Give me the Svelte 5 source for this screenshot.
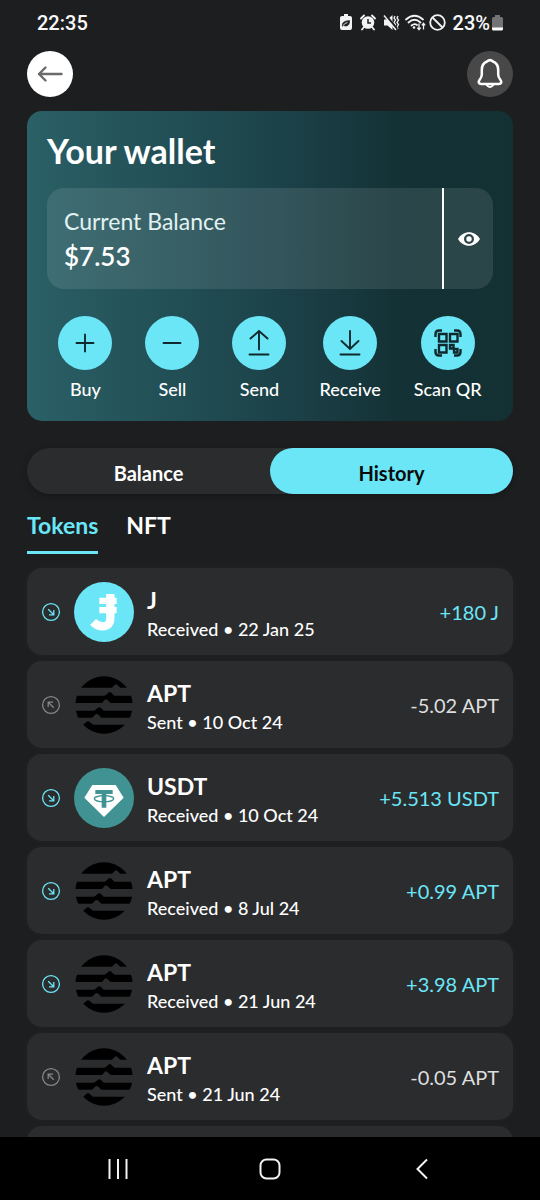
<script>
  let tab = $state('History');
  let kind = $state('Tokens');
  let visible = $state(true);

  const actions = ['Buy', 'Sell', 'Send', 'Receive', 'Scan QR'];
  const rows = [
    { coin: 'J', dir: 'Received', date: '22 Jan 25', amount: '+180 J' },
    { coin: 'APT', dir: 'Sent', date: '10 Oct 24', amount: '-5.02 APT' },
    { coin: 'USDT', dir: 'Received', date: '10 Oct 24', amount: '+5.513 USDT' },
    { coin: 'APT', dir: 'Received', date: '8 Jul 24', amount: '+0.99 APT' },
    { coin: 'APT', dir: 'Received', date: '21 Jun 24', amount: '+3.98 APT' },
    { coin: 'APT', dir: 'Sent', date: '21 Jun 24', amount: '-0.05 APT' }
  ];
</script>

<div class="screen">
  <div class="status">
    <span class="time">22:35</span>
    <div class="indicators">
      <svg width="12" height="17" viewBox="0 0 12 17"><path fill="#f2f2f2" d="M4 0h4v2h2q2 0 2 2v10q0 2-2 2H2q-2 0-2-2V4q0-2 2-2h2z"/><path d="M2.500 12.500C1.500 8 5 7 9.500 6.500C10 11 7 13 3.500 11.500M3 12q2-3 4-3.500" fill="#1d1e20" stroke="#1d1e20" stroke-width=".6"/><path d="M3 11.500q2-2.500 4.500-3" fill="none" stroke="#f2f2f2" stroke-width=".9"/></svg>
      <svg width="16" height="17" viewBox="0 0 16 17"><circle cx="8" cy="8.500" r="6.300" fill="#f2f2f2"/><path d="M1 4.500L4 1.500M15 4.500L12 1.500M4 13l-2 2.500M12 13l2 2.500" stroke="#f2f2f2" stroke-width="1.800" stroke-linecap="round"/><path d="M8 5v4h3" fill="none" stroke="#1d1e20" stroke-width="1.500"/></svg>
      <svg width="17" height="17" viewBox="0 0 17 17"><path d="M1 5.500h3.500L9.500 1v15l-5-4.500H1z" fill="#f2f2f2"/><path d="M12 2l-1 2 1.500 2L11 8.500l1.500 2L11 13l1 2M15 2l-1 2 1.500 2L14 8.500l1.500 2L14 13l1 2" fill="none" stroke="#f2f2f2" stroke-width="1.300"/><path d="M2.500 1L14 15" stroke="#1d1e20" stroke-width="2.400"/><path d="M1 1.500L13 16" stroke="#f2f2f2" stroke-width="1.400"/></svg>
      <svg class="wifi" width="21" height="17" viewBox="0 0 21 17"><path d="M1 5.500Q9.500-2 18 5.500M3.500 8.500Q9.500 3 15.500 8.500M6.500 11.500q3-2.500 5.500-.5" fill="none" stroke="#f2f2f2" stroke-width="1.800" stroke-linecap="round"/><circle cx="9" cy="13.500" r="1.300" fill="#f2f2f2"/><path d="M14 9.500v6M12.300 13.700l1.700 2 1.700-2M18.500 15.500v-6M16.800 11.300l1.700-2 1.700 2" fill="none" stroke="#f2f2f2" stroke-width="1.300"/></svg>
      <svg width="17" height="17" viewBox="0 0 17 17"><circle cx="8.500" cy="8.500" r="7.300" fill="none" stroke="#f2f2f2" stroke-width="1.800"/><path d="M3.500 3.500l10 10" stroke="#f2f2f2" stroke-width="1.800"/></svg>
      <span class="percent">23%</span>
      <svg width="11" height="16" viewBox="0 0 11 16"><path d="M3 0h5v2h1.500q1.500 0 1.500 1.500V13H0V3.500Q0 2 1.500 2H3z" fill="#747476"/><path d="M0 12.500h11V14q0 1.500-1.500 1.500h-8Q0 15.500 0 14z" fill="#fff"/></svg>
    </div>
  </div>

  <header>
    <button class="round back" aria-label="Back">
      <svg width="26" height="18" viewBox="0 0 26 18"><path d="M24.500 9H2M8.500 2.500L2 9l6.500 6.500" fill="none" stroke="#6a6a6a" stroke-width="2.400" stroke-linecap="round" stroke-linejoin="round"/></svg>
    </button>
    <button class="round bell" aria-label="Notifications">
      <svg width="26" height="32" viewBox="0 0 26 32"><path d="M10 3.500Q13 .8 16 3.500C20 5 21.200 8.500 21.200 12v4.500q0 2.500 2 5c2 2.600 1 4.500-1.500 4.500H4.300C1.800 26 .8 24.100 2.800 21.500q2-2.500 2-5V12C4.800 8.500 6 5 10 3.500z" fill="none" stroke="#fff" stroke-width="2.500" stroke-linejoin="round"/><path d="M8 26.500c1.500 1 2.500 3.500 5 3.500s3.500-2.500 5-3.500z" fill="#fff"/><path d="M11 27h4q-2 1.500-4 0" fill="#484849"/></svg>
    </button>
  </header>

  <main>
    <section class="wallet">
      <h1>Your wallet</h1>
      <div class="balance">
        <div class="figures">
          <span class="caption">Current Balance</span>
          <strong>{visible ? '$7.53' : '••••'}</strong>
        </div>
        <button class="eye" aria-label="Show or hide balance" onclick={() => (visible = !visible)}>
          <svg width="24" height="16" viewBox="0 0 24 16"><path fill-rule="evenodd" fill="#fff" d="M1 8C6-1 18-1 23 8C18 17 6 17 1 8zM12 3a5 5 0 1 0 0 10a5 5 0 1 0 0-10z"/><circle cx="12" cy="8" r="2.700" fill="#fff"/></svg>
        </button>
      </div>
      <div class="actions">
        {#each actions as name}
          <button class="action">
            <span class="disc">
              {#if name === 'Scan QR'}
                <svg width="28" height="28" viewBox="0 0 28 28" fill="none" stroke="#10292d" stroke-width="2.400"><path d="M1.500 8V5q0-3.500 3.500-3.500H8M20 1.500h3q3.500 0 3.500 3.500v3M26.500 20v3q0 3.500-3.500 3.500h-3M8 26.500H5Q1.500 26.500 1.500 23v-3"/><path d="M5 5h7.500v7.500H5zM16 5h7.500v7.500H16zM5 16h7.500v7.500H5zM16 16h3.500v3.500H16zM20 20h3.500v3.500H20z"/></svg>
              {:else}
                <svg width="28" height="28" viewBox="0 0 28 28" fill="none" stroke="#10292d" stroke-width="1.900" stroke-linecap="round">
                  {#if name === 'Buy'}<path d="M5.500 14h17M14 5.500v17"/>
                  {:else if name === 'Sell'}<path d="M5.500 14h17"/>
                  {:else if name === 'Send'}<path d="M14 20.500V2M5.500 9.500L14 2l8.500 7.500M4.500 25.500h19"/>
                  {:else}<path d="M14 2v18M5.500 12L14 20l8.500-8M4.500 25.500h19"/>{/if}
                </svg>
              {/if}
            </span>
            <span>{name}</span>
          </button>
        {/each}
      </div>
    </section>

    <div class="switch">
      {#each ['Balance', 'History'] as name}
        <button class:on={tab === name} onclick={() => (tab = name)}>{name}</button>
      {/each}
    </div>

    <nav class="tabs">
      {#each ['Tokens', 'NFT'] as name}
        <button class:on={kind === name} onclick={() => (kind = name)}>{name}</button>
      {/each}
    </nav>

    <ul>
      {#each rows as row}
        <li class:sent={row.dir === 'Sent'}>
          <svg class="dir" width="20" height="20" viewBox="0 0 20 20" fill="none" stroke="currentColor" stroke-width="1.300"><circle cx="10" cy="10" r="8.400"/>
            {#if row.dir === 'Sent'}<path d="M12.800 12.800L7.200 7.200M7.200 12V7.200H12"/>
            {:else}<path d="M7.200 7.200l5.600 5.600M12.800 8v4.800H8"/>{/if}
          </svg>
          {#if row.coin === 'J'}
            <svg class="coin" viewBox="0 0 180 180"><circle cx="90" cy="90" r="90" fill="#6ae6f7"/><path d="M109 36V108Q109 133 86 133Q70 133 57 120" fill="none" stroke="#fff" stroke-width="25"/><path d="M76 47h52v19H76zM76 75h52v19H76z" fill="#fff"/></svg>
          {:else if row.coin === 'USDT'}
            <svg class="coin" viewBox="0 0 180 180"><circle cx="90" cy="90" r="90" fill="#409293"/><path d="M55 51h70l24 38-59 58-59-58z" fill="#fff"/><path d="M64 66h52v12H97v41H83V78H64z" fill="#409293"/><ellipse cx="90" cy="92" rx="29" ry="9" fill="none" stroke="#409293" stroke-width="4"/></svg>
          {:else}
            <svg class="coin" viewBox="-4 -4 180 180"><circle cx="86" cy="86" r="86"/><path fill="#2b2c2e" d="M-2 34H110L118 26Q122 22 126 26L135 34H174V58H117L108 49Q104 45 99 49L91 57L86 58H-2zM-2 80H80L88 71Q92 67 96 71L106 80H174V103H85L77 95Q72 90 67 95L59 102L54 103H-2zM-2 124H50L59 115Q64 111 69 115L78 124H174V145H53L43 137Q38 132 33 137L24 145L18 151H-2z"/></svg>
          {/if}
          <div class="what">
            <b>{row.coin}</b>
            <span>{row.dir} • {row.date}</span>
          </div>
          <span class="amount">{row.amount}</span>
        </li>
      {/each}
      <li aria-hidden="true"></li>
    </ul>
  </main>

  <footer>
    <button aria-label="Recent apps"><svg width="22" height="22" viewBox="0 0 22 22"><path d="M2.500 1v20M11 1v20M19.500 1v20" stroke="#f2f2f2" stroke-width="2"/></svg></button>
    <button aria-label="Home"><svg width="22" height="22" viewBox="0 0 22 22"><rect x="1.500" y="1.500" width="19" height="19" rx="6" fill="none" stroke="#f2f2f2" stroke-width="2"/></svg></button>
    <button aria-label="Go back"><svg width="22" height="22" viewBox="0 0 22 22"><path d="M16 1.500L6.500 11l9.500 9.500" fill="none" stroke="#f2f2f2" stroke-width="2"/></svg></button>
  </footer>
</div>

<style>
  :global(body) { margin: 0; background: #1d1e20; }
  .screen {
    height: 100vh;
    display: flex;
    flex-direction: column;
    background: #1d1e20;
    color: #fff;
    font-family: "Century Gothic", Lato, sans-serif;
    overflow: hidden;
  }
  button {
    font: inherit;
    color: inherit;
    background: none;
    border: 0;
    padding: 0;
    cursor: pointer;
  }
  svg { display: block; flex: none; }

  .status {
    display: flex;
    justify-content: space-between;
    align-items: center;
    height: 45px;
    padding: 0 37px;
    font: 500 20px/24px Roboto, sans-serif;
    color: #f8f8f8;
    flex: none;
  }
  .indicators { display: flex; align-items: center; gap: 5px; }
  .indicators svg:first-child { margin-right: 3px; }
  .indicators svg:nth-child(2) { margin-right: 2px; }
  .indicators .wifi { margin-right: -2px; }
  .percent { padding-left: 2px; }
  .percent + svg { margin-left: -3px; }

  header {
    display: flex;
    justify-content: space-between;
    padding: 6px 27px 14px;
    flex: none;
  }
  .round {
    width: 46px;
    height: 46px;
    border-radius: 50%;
    display: grid;
    place-items: center;
  }
  .back { background: #fff; }
  .bell { background: #484849; }

  main {
    flex: 1;
    min-height: 0;
    overflow: hidden;
    padding: 0 27px;
  }
  .wallet {
    padding: 20px;
    border-radius: 15px;
    background: linear-gradient(90deg, #2a6066 0%, #1c4249 52%, #143236 76%, #133033 100%);
  }
  h1 { margin: 0; font-size: 34px; line-height: 40px; font-weight: 700; }
  .balance {
    display: flex;
    height: 101px;
    margin-top: 17px;
    border-radius: 17px;
    background: rgba(255, 255, 255, .1);
  }
  .figures {
    flex: 1;
    display: flex;
    flex-direction: column;
    justify-content: center;
    padding-left: 17px;
  }
  .caption { font-size: 23px; line-height: 34px; color: #e2f2f3; }
  .figures strong { font-size: 26px; line-height: 36px; font-weight: 600; }
  .eye { width: 51px; border-left: 2px solid #fff; display: grid; place-items: center; }
  .actions { display: flex; justify-content: center; gap: 33px; margin-top: 27px; }
  .action {
    display: flex;
    flex-direction: column;
    align-items: center;
    gap: 7px;
    font-size: 18px;
    line-height: 24px;
    font-weight: 500;
  }
  .disc {
    width: 54px;
    height: 54px;
    border-radius: 50%;
    background: #6ae6f7;
    display: grid;
    place-items: center;
  }

  .switch {
    display: grid;
    grid-template-columns: 1fr 1fr;
    margin-top: 27px;
    border-radius: 23px;
    background: #2b2c2e;
    box-shadow: 0 2px 6px rgba(0, 0, 0, .25);
  }
  .switch button { height: 46px; border-radius: 23px; font-size: 20px; font-weight: 700; padding-top: 3px; }
  .switch .on { background: #6ae6f7; color: #0b0b0c; }

  .tabs { display: flex; gap: 28px; margin-top: 14px; }
  .tabs button {
    height: 46px;
    padding-bottom: 9px;
    border-bottom: 3px solid transparent;
    font-size: 23px;
    font-weight: 700;
  }
  .tabs .on { color: #6ae6f7; border-color: #6ae6f7; }

  ul {
    list-style: none;
    margin: 14px 0 0;
    padding: 0;
    display: flex;
    flex-direction: column;
    gap: 6px;
  }
  li {
    display: flex;
    align-items: center;
    height: 87px;
    flex: none;
    padding: 0 14px;
    box-sizing: border-box;
    border-radius: 15px;
    background: #2b2c2e;
    box-shadow: 0 0 8px rgba(255, 255, 255, .03);
  }
  .dir { color: #6ae6f7; }
  .sent .dir { color: #858587; }
  .coin { width: 60px; height: 60px; margin: 0 13px; }
  .what { flex: 1; display: flex; flex-direction: column; padding-top: 4px; }
  .what b { font-size: 23px; line-height: 30px; font-weight: 700; }
  .what span { font-size: 18px; line-height: 28px; font-weight: 500; }
  .amount { font-size: 20px; color: #6ae6f7; white-space: nowrap; }
  .sent .amount { color: #dedede; }

  footer {
    height: 63px;
    flex: none;
    display: grid;
    grid-template-columns: repeat(3, 1fr);
    justify-items: center;
    align-items: center;
    background: #000;
    padding: 0 42px;
    box-sizing: border-box;
  }
</style>
